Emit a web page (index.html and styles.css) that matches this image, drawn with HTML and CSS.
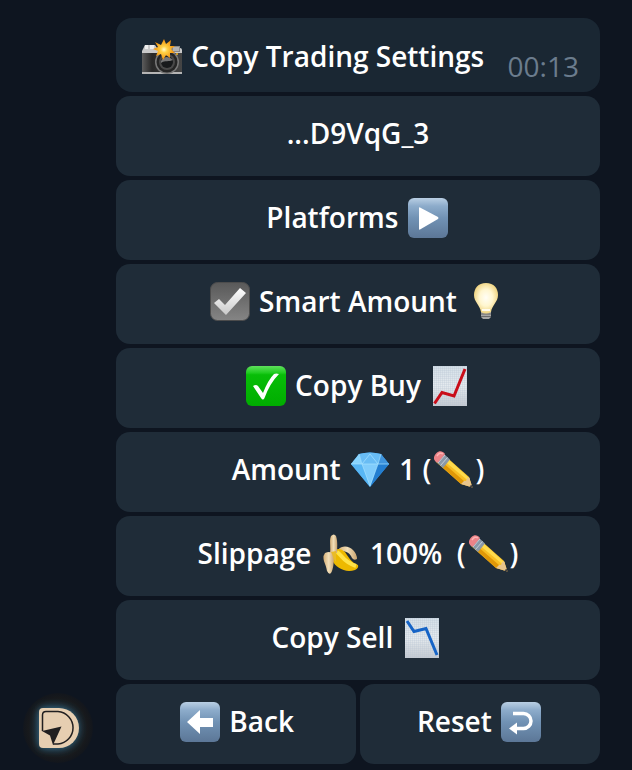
FILE: index.html
```
<!DOCTYPE html>
<html lang="en">
<head>
<meta charset="utf-8">
<meta name="viewport" content="width=device-width, initial-scale=1">
<title>Copy Trading Settings</title>
<link rel="stylesheet" href="styles.css">
</head>
<body>
<svg class="defs" width="0" height="0" aria-hidden="true">
  <defs>
    <linearGradient id="blue" x1="0" y1="0" x2="0" y2="1"><stop offset="0" stop-color="#b9cfe4"/><stop offset=".2" stop-color="#8daccb"/><stop offset=".5" stop-color="#7192b4"/><stop offset="1" stop-color="#5c7797"/></linearGradient>
    <linearGradient id="grey" x1="0" y1="0" x2="0" y2="1"><stop offset="0" stop-color="#595959"/><stop offset="1" stop-color="#858585"/></linearGradient>
    <linearGradient id="silver" x1="0" y1="0" x2="0" y2="1"><stop offset="0" stop-color="#fff"/><stop offset="1" stop-color="#c9c9c9"/></linearGradient>
    <linearGradient id="green" x1="0" y1="0" x2="0" y2="1"><stop offset="0" stop-color="#5fe05c"/><stop offset=".17" stop-color="#20cc20"/><stop offset=".22" stop-color="#08bd08"/><stop offset="1" stop-color="#00ad00"/></linearGradient>
    <linearGradient id="sheet" x1="0" y1="0" x2="0" y2="1"><stop offset="0" stop-color="#d5e0e8"/><stop offset=".5" stop-color="#e6ebef"/><stop offset="1" stop-color="#c4c9d0"/></linearGradient>
    <pattern id="lines" width="2" height="2" patternUnits="userSpaceOnUse"><path d="M0 0H2M0 0V2" stroke="#b8c5d2" stroke-width=".6"/></pattern>
    <radialGradient id="glass" cx=".5" cy=".48" r=".55"><stop offset="0" stop-color="#fffef6"/><stop offset=".5" stop-color="#fff6cf"/><stop offset="1" stop-color="#edcf76"/></radialGradient>
    <linearGradient id="body" x1="0" y1="0" x2="1" y2="0"><stop offset="0" stop-color="#5c5c5c"/><stop offset=".25" stop-color="#282828"/><stop offset="1" stop-color="#454545"/></linearGradient>
    <radialGradient id="burst"><stop offset="0" stop-color="#fffbd0"/><stop offset=".3" stop-color="#ffd246"/><stop offset="1" stop-color="#ef8a08"/></radialGradient>
    <linearGradient id="wood" x1="0" y1="1" x2="1" y2="0"><stop offset="0" stop-color="#f2a90c"/><stop offset="1" stop-color="#ffd43b"/></linearGradient>
    <linearGradient id="peel" x1="0" y1="0" x2="1" y2="0"><stop offset="0" stop-color="#d5ae75"/><stop offset=".5" stop-color="#f2dfb9"/><stop offset="1" stop-color="#c9a36f"/></linearGradient>
    <symbol id="pencil" viewBox="-2 0 44 40">
      <path d="M10 4L36 27L39.500 37.500L28 34L3 12Z" fill="url(#wood)"/>
      <path d="M14 8L37 29L35.500 31L10 10Z" fill="#ffdb4c"/>
      <path d="M6 14L28 34L31 34.500L31.500 31.500L8 11Z" fill="#df9708"/>
      <path d="M28 34L31 31L33 31L34 28.500L36 27L39.500 37.500Z" fill="#e8c58c"/>
      <path d="M36.500 36.500L38.500 34.500L39.800 38Z" fill="#454142"/>
      <path d="M10.500 3.500L17 9.500L10 18L2.500 11Z" fill="#8998a8"/>
      <path d="M12 5L5 13M14.500 7.500L7.500 15.500" stroke="#c5ced7" stroke-width="1"/>
      <path d="M3 12C-.5 9 1 5.500 3.500 3C6 .5 9.500 .5 12 4L5 12.500Z" fill="#ed8388"/>
      <path d="M4 6C6 3 8 2.500 10 4" stroke="#ffb3b3" stroke-width="1.500" fill="none"/>
    </symbol>
  </defs>
</svg>
<main class="chat">
  <aside class="side">
    <svg class="avatar" viewBox="0 0 72 72" role="img" aria-label="Bot avatar">
      <defs>
        <radialGradient id="disc"><stop offset="0" stop-color="#1b2930"/><stop offset=".6" stop-color="#1a2228"/><stop offset=".86" stop-color="#17191c"/><stop offset="1" stop-color="#12161d"/></radialGradient>
        <filter id="glow" x="-50%" y="-50%" width="200%" height="200%"><feGaussianBlur stdDeviation="4"/></filter>
      </defs>
      <circle cx="36" cy="36" r="35" fill="url(#disc)"/>
      <path d="M22 16H36C62 16 62 56 36 56H22Q17 56 17 51V21Q17 16 22 16Z" fill="#397c9e" filter="url(#glow)"/>
      <path d="M21 16H37A20 20 0 0 1 37 56H21Q17 56 17 52V20Q17 16 21 16Z" fill="#e6ceb1"/>
      <path d="M20.500 39V23Q20.500 19.500 24 19.500H36A16.300 16.300 0 0 1 36 52H31" fill="none" stroke="#211f20" stroke-width="1.500"/>
      <path d="M20 39L39.500 34.500L31 53L28 43.500Z" fill="#211f20"/>
    </svg>
  </aside>
  <section class="panel">
    <header class="message">
      <h1 class="title"><svg class="emoji" viewBox="-2 0 44 40" aria-hidden="true">
        <path d="M2 10Q2 8 4 8H13L15 11H38Q40 11 40 13V18H0V14Z" fill="#c9c9c9"/>
        <path d="M3 8H6V12H3ZM8 8H12V12H8Z" fill="#eee"/>
        <path d="M29 9H38V15H29Z" fill="#888"/><path d="M31 11H37M31 13H37" stroke="#ddd"/>
        <path d="M0 16H40V36H0Z" fill="url(#body)"/>
        <path d="M0 35H40V37H0Z" fill="#b5b5b5"/>
        <circle cx="25" cy="25" r="12" fill="#777"/><circle cx="25" cy="25" r="10.500" fill="#252525"/><circle cx="25" cy="25" r="8" fill="#494949"/><circle cx="25" cy="25" r="6" fill="#181a1c"/>
        <path d="M19 24C23 18 27 20 31 23C27 25 23 23 19 26Z" fill="#777"/>
        <path d="M22 2L24 7L29 3L28 9L33 9L29 12L33 16L28 16L28 21L24 18L21 23L19 17L14 19L16 14L11 12L16 10L13 5L19 8Z" fill="url(#burst)"/>
        <circle cx="35" cy="17" r="1" fill="#f0b323"/>
      </svg> Copy Trading Settings</h1>
      <time class="time">00:13</time>
    </header>
    <button class="key" type="button">...D9VqG_3</button>
    <button class="key" type="button">Platforms <svg class="emoji" viewBox="-2 0 44 40" aria-hidden="true"><rect width="40" height="40" rx="6" fill="url(#blue)"/><path d="M11 10Q11 9 12 9.500L30 19Q31 20 30 21L12 31.500Q11 32 11 31Z" fill="#fff"/></svg></button>
    <button class="key" type="button"><svg class="emoji" viewBox="-2 0 44 40" aria-hidden="true"><rect x=".5" y=".5" width="39" height="38" rx="7" fill="url(#grey)" stroke="#4c4c4c"/><path d="M4 21L9 17L15 23L30 6L36 11L16 33Z" fill="url(#silver)"/></svg> Smart Amount <svg class="emoji" viewBox="-2 0 44 40" aria-hidden="true"><path d="M15 30H25V35L23 37H17L15 35Z" fill="#a6a6a6"/><path d="M15 32H25M15 34.500H25" stroke="#686868"/><path d="M20 1C12 1 8 6.500 8 13C8 20 14 23 15 30Q20 33 25 30C26 23 32 20 32 13C32 6.500 28 1 20 1Z" fill="url(#glass)"/><path d="M16 28H24" stroke="#fffbed" stroke-width="2"/></svg></button>
    <button class="key" type="button"><svg class="emoji" viewBox="-2 0 44 40" aria-hidden="true"><rect width="40" height="40" rx="6" fill="url(#green)"/><path d="M7 20Q10 18 12 20L17 27Q22 14 28 8Q30 7 33 8Q24 17 18.500 32Q17 35 15 32Z" fill="#fff"/></svg> Copy Buy <svg class="emoji" viewBox="-2 0 44 40" aria-hidden="true"><path d="M3 0H37V40H3Z" fill="url(#sheet)"/><path d="M3 0H37V40H3Z" fill="url(#lines)"/><path d="M4.500 37.500L12 26.500L24 30L35 3" fill="none" stroke="#c90d19" stroke-width="3"/></svg></button>
    <button class="key" type="button">Amount <svg class="emoji" viewBox="-2 0 44 40" aria-hidden="true"><path d="M9 4Q20 1 31 4L39 14L20 37L1 14Z" fill="#3b9eea"/><path d="M9 4L12 14H1Z" fill="#89d5ff"/><path d="M9 4Q20 1 31 4L28 14H12Z" fill="#68bcf4"/><path d="M31 4L39 14H28Z" fill="#3f94dc"/><path d="M12 14L20 37L1 14Z" fill="#58b6f4"/><path d="M12 14H28L20 37Z" fill="#80ccfb"/><path d="M28 14H39L20 37Z" fill="#237ed0"/><path d="M1 14H39M9 4L12 14L20 4L28 14L31 4M12 14L20 36L28 14" stroke="#a8e3ff" stroke-width=".7" fill="none"/></svg> 1 (<svg class="emoji" aria-hidden="true"><use href="#pencil"/></svg>)</button>
    <button class="key" type="button">Slippage <svg class="emoji" viewBox="-2 0 44 40" aria-hidden="true"><path d="M17 16C21 11 28 12 32 16Q36 20 36 25Q33 27 31 24C29 19 24 16 17 18Z" fill="url(#peel)"/><path d="M14 16Q19 13 24 18C28 24 31 29 37 31Q38 34 34 36C24 39 15 34 11 26Z" fill="#edb900"/><path d="M16 18C20 20 22 28 35 32" fill="none" stroke="#ffe348" stroke-width="4"/><path d="M10 2Q13-1 15 2C17 8 16 14 16 19L9 19C10 13 8 7 10 2Z" fill="url(#peel)"/><path d="M4 19Q10 16 13 21C13 29 12 36 10 39Q8 41 6 37C5 30 2 28 2.500 22Z" fill="url(#peel)"/><path d="M10 18L15 17L15 28Q12 25 11 20Z" fill="#e9bb29"/></svg> 100%&nbsp; (<svg class="emoji" aria-hidden="true"><use href="#pencil"/></svg>)</button>
    <button class="key" type="button">Copy Sell <svg class="emoji" viewBox="-2 0 44 40" aria-hidden="true"><path d="M3 0H37V40H3Z" fill="url(#sheet)"/><path d="M3 0H37V40H3Z" fill="url(#lines)"/><path d="M5 3L12 13.500L24 10.500L35 37" fill="none" stroke="#1664c6" stroke-width="3"/></svg></button>
    <div class="pair">
      <button class="key" type="button"><svg class="emoji" viewBox="-2 0 44 40" aria-hidden="true"><rect width="40" height="40" rx="6" fill="url(#blue)"/><path d="M7 20L20 8V16H33V25H20V32Z" fill="#fff"/></svg> Back</button>
      <button class="key" type="button">Reset <svg class="emoji" viewBox="-2 0 44 40" aria-hidden="true"><rect width="40" height="40" rx="6" fill="url(#blue)"/><path d="M12 11.500H22.500A7.500 7.500 0 0 1 22.500 26.500H15" fill="none" stroke="#fff" stroke-width="3.500"/><path d="M8 26.500L16 20.500V32.500Z" fill="#fff"/></svg></button>
    </div>
  </section>
</main>
</body>
</html>
```
FILE: styles.css
```
* { box-sizing: border-box; }

body {
  margin: 0;
  background: #0e1520;
  color: #fff;
  font-family: "Open Sans", "Noto Sans", sans-serif;
  font-size: 28px;
  line-height: 40px;
}

.defs { position: absolute; }

.chat {
  display: grid;
  grid-template-columns: 72px 1fr;
  gap: 22px;
  padding: 18px 32px 6px 22px;
}

.side {
  display: flex;
  align-items: flex-end;
}

.avatar {
  display: block;
  width: 72px;
  height: 72px;
}

.panel {
  display: flex;
  flex-direction: column;
  gap: 4px;
  min-width: 0;
}

.message {
  display: flex;
  justify-content: space-between;
  padding: 17px 21px 7px 24px;
  border-radius: 16px;
  background: #1a2733;
}

.title {
  margin: 0 0 8px;
  font-size: 28px;
  font-weight: 600;
  line-height: 42px;
}

.time {
  align-self: flex-end;
  color: #6b7c8d;
  line-height: 38px;
}

.key {
  flex: 1;
  min-height: 80px;
  padding: 15px 8px 21px;
  border: 0;
  border-radius: 14px;
  background: #1f2c38;
  color: inherit;
  font: inherit;
  font-weight: 600;
  cursor: pointer;
}

.key:hover { background: #263644; }

.emoji {
  width: 44px;
  height: 40px;
  vertical-align: -10px;
}

.pair {
  display: flex;
  gap: 4px;
}
```
